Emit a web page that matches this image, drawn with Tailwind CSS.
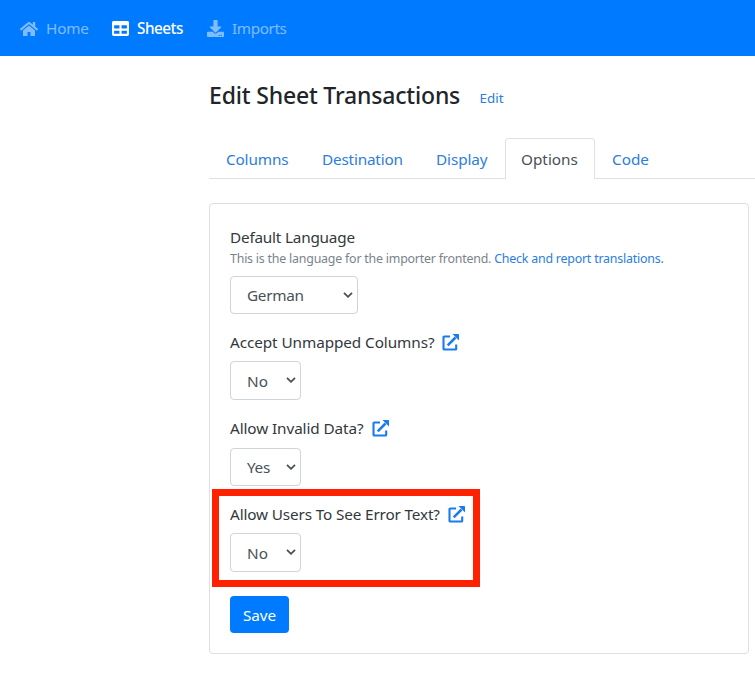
<!DOCTYPE html>
<html lang="en">
<head>
<meta charset="utf-8">
<title>Edit Sheet Transactions</title>
<script src="https://cdn.jsdelivr.net/npm/@tailwindcss/browser@4"></script>
</head>
<body class="bg-white font-['Noto_Sans',sans-serif] text-[15.3px] leading-6 text-[#33383c] overflow-hidden whitespace-nowrap h-[679px]">
<svg class="hidden">
  <symbol id="ext" viewBox="0 0 17 17"><path d="M8 2.5H2.3Q1.5 2.5 1.5 3.3V14.7Q1.5 15.5 2.3 15.5H13.4Q14.2 15.5 14.2 14.7V10.5" fill="none" stroke="currentColor" stroke-width="2.1"/><path d="M5.7 11.3 13.5 3.5" stroke="currentColor" stroke-width="2.5"/><path d="M10.5 0H16.4Q17 0 17 .6V6.5z" fill="currentColor"/></symbol>
  <symbol id="chev" viewBox="0 0 10 6"><path d="M1 .9 5 4.8 9 .9" fill="none" stroke="currentColor" stroke-width="1.8"/></symbol>
</svg>
<nav class="flex h-14 items-center bg-[#007bff] pl-5 text-white/50">
  <a class="flex w-[92px] items-center gap-2"><svg class="mt-px h-4 w-[18px]" viewBox="0 0 576 512" fill="currentColor"><path d="M280.37 148.26L96 300.11V464a16 16 0 0 0 16 16l112.06-.29a16 16 0 0 0 15.92-16V368a16 16 0 0 1 16-16h64a16 16 0 0 1 16 16v95.64a16 16 0 0 0 16 16.05L464 480a16 16 0 0 0 16-16V300L295.67 148.26a12.19 12.19 0 0 0-15.3 0zM571.6 251.47L488 182.56V44.05a12 12 0 0 0-12-12h-56a12 12 0 0 0-12 12v72.61L318.47 43a48 48 0 0 0-61 0L4.34 251.47a12 12 0 0 0-1.6 16.9l25.5 31A12 12 0 0 0 45.15 301l235.22-193.74a12.19 12.19 0 0 1 15.3 0L530.9 301a12 12 0 0 0 16.9-1.6l25.5-31a12 12 0 0 0-1.7-16.93z"/></svg><span class="tracking-[-0.2px]">Home</span></a>
  <a class="flex w-[95px] items-center gap-2 text-white"><svg class="mt-px h-[17px] w-[17px]" viewBox="0 0 512 512" fill="currentColor"><path d="M464 32H48C21.49 32 0 53.49 0 80v352c0 26.51 21.49 48 48 48h416c26.51 0 48-21.49 48-48V80c0-26.51-21.49-48-48-48zM224 416H64v-96h160v96zm0-160H64v-96h160v96zm224 160H288v-96h160v96zm0-160H288v-96h160v96z"/></svg><span class="font-medium tracking-[-0.5px]">Sheets</span></a>
  <a class="flex items-center gap-2"><svg class="mt-px h-[17px] w-[17px]" viewBox="0 0 512 512" fill="currentColor"><path d="M216 0h80c13.3 0 24 10.7 24 24v168h87.7c17.8 0 26.7 21.5 14.1 34.1L269.7 378.3c-7.5 7.5-19.8 7.5-27.3 0L90.1 226.1c-12.6-12.6-3.7-34.1 14.1-34.1H192V24c0-13.3 10.7-24 24-24zm296 376v112c0 13.3-10.7 24-24 24H24c-13.3 0-24-10.7-24-24V376c0-13.3 10.7-24 24-24h146.7l49 49c20.1 20.1 52.5 20.1 72.6 0l49-49H488c13.3 0 24 10.7 24 24zm-124 88c0-11-9-20-20-20s-20 9-20 20 9 20 20 20 20-9 20-20zm64 0c0-11-9-20-20-20s-20 9-20 20 9 20 20 20 20-9 20-20z"/></svg><span class="tracking-[-0.4px]">Imports</span></a>
</nav>
<main class="ml-[209px]">
  <header class="flex h-[82px] items-start pt-[24px]">
    <h1 class="w-[270.5px] text-[23px] leading-[30px] font-medium tracking-[-0.18px] text-[#212529]">Edit Sheet Transactions</h1>
    <a class="pt-1.5 text-[13.4px] leading-6 text-[#2b7de0]">Edit</a>
  </header>
  <div class="flex h-[41px] items-stretch border-b border-[#dee2e6] text-[#2b7de0] leading-[42px]">
    <a class="w-24 pl-[17px] tracking-[-0.15px]">Columns</a>
    <a class="w-[114px] pl-[17px] tracking-[-0.18px]">Destination</a>
    <a class="w-[86px] pl-[17px] tracking-[-0.1px]">Display</a>
    <a class="h-[41px] w-[90px] rounded-t border border-b-0 border-[#dee2e6] bg-white pl-[15px] leading-10 text-[#495057]">Options</a>
    <a class="pl-[17px]">Code</a>
  </div>
  <section class="mt-6 flex h-[451px] w-[540px] flex-col items-start rounded border border-[#dfdfdf] pl-5 pt-[21px]">
    <label class="h-[25px] tracking-[-0.2px]">Default Language</label>
    <p class="h-5 text-[12.4px] leading-[18px] tracking-[-0.21px] text-[#7a838b]">This is the language for the importer frontend. <a class="text-[#2b7de0]">Check and report translations.</a></p>
    <div class="mt-[6px] flex h-[38px] w-32 shrink-0 items-center justify-between rounded border border-[#ced4da] pl-4 pr-[4px] tracking-[-0.3px] text-[#495057]">German<svg class="mb-px h-[6px] w-[10px]"><use href="#chev"/></svg></div>
    <label class="mt-4 flex h-6 items-center"><span class="w-[212px] tracking-[-0.08px]">Accept Unmapped Columns?</span><svg class="h-[17px] w-[17px] text-[#1a7bee]"><use href="#ext"/></svg></label>
    <div class="mt-[7px] flex h-[39px] w-[71px] shrink-0 items-center justify-between rounded border border-[#ced4da] pl-4 pr-[4px] text-[#495057]">No<svg class="mb-px h-[6px] w-[10px]"><use href="#chev"/></svg></div>
    <label class="mt-4 flex h-6 items-center"><span class="w-[142px] tracking-[-0.1px]">Allow Invalid Data?</span><svg class="h-[17px] w-[17px] text-[#1a7bee]"><use href="#ext"/></svg></label>
    <div class="mt-2 flex h-[38px] w-[71px] shrink-0 items-center justify-between rounded border border-[#ced4da] pl-4 pr-[4px] tracking-[-0.3px] text-[#495057]">Yes<svg class="mb-px h-[6px] w-[10px]"><use href="#chev"/></svg></div>
    <div class="relative mt-4 flex flex-col">
      <div class="absolute -left-[18px] -top-[13px] h-[98px] w-[267.5px] border-7 border-[#ff2200]"></div>
      <label class="flex h-6 items-center"><span class="w-[218px] tracking-[-0.14px]">Allow Users To See Error Text?</span><svg class="h-[17px] w-[17px] text-[#1a7bee]"><use href="#ext"/></svg></label>
      <div class="mt-[7px] flex h-[39px] w-[71px] items-center justify-between rounded border border-[#ced4da] pl-4 pr-[4px] text-[#495057]">No<svg class="mb-px h-[6px] w-[10px]"><use href="#chev"/></svg></div>
    </div>
    <button class="mt-6 flex h-[37px] w-[59px] shrink-0 items-center justify-center rounded bg-[#007bff] tracking-[-0.1px] text-white">Save</button>
  </section>
</main>
</body>
</html>
